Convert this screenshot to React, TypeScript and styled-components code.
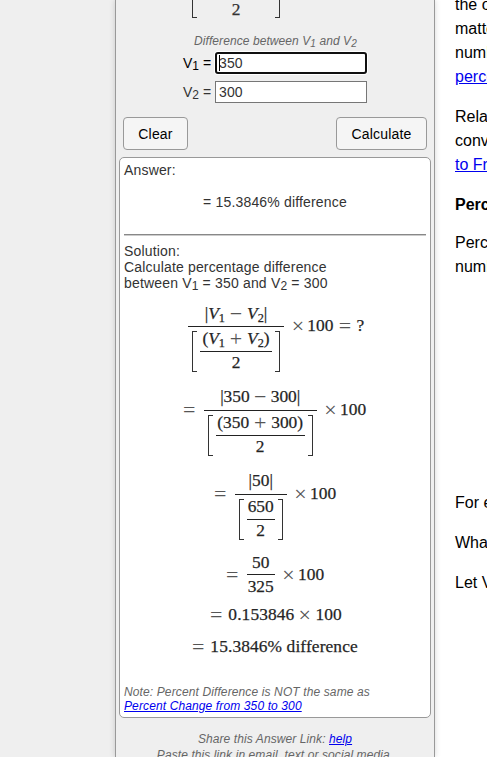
import React from "react";
import styled, { createGlobalStyle } from "styled-components";

const GlobalStyle = createGlobalStyle`
  * { box-sizing: border-box; }
  body {
    margin: 0;
    background: #fff;
    font-family: "Liberation Sans", Arial, sans-serif;
    overflow: hidden;
  }
  a { color: #0000ee; text-decoration: underline; }
`;

const Page = styled.div`
  display: grid;
  grid-template-columns: 115px 320px 1fr;
  width: 487px;
  height: 757px;
  overflow: hidden;
`;

const Gutter = styled.div`
  background: #efefef;
`;

const Calculator = styled.section`
  height: 757px;
  overflow: hidden;
  padding: 0 4px;
  background: #efefef;
  border-left: 1px solid #999;
  border-right: 1px solid #999;
  box-shadow: 0 0 6px rgba(0, 0, 0, 0.16);
  color: #333;
  font-size: 14px;
  clip-path: inset(0 -8px);
`;

const FormulaTail = styled.div`
  display: flex;
  height: 18px;
  padding-left: 72px;
`;

const FormulaTwo = styled.div`
  width: 78px;
  text-align: center;
  font: 17.4px/18px "Liberation Serif", serif;
  -webkit-text-stroke: 0.25px #333;
`;

const Bracket = styled.span<{ $side: "left" | "right"; $height: number }>`
  flex: none;
  width: 5px;
  height: ${(p) => p.$height}px;
  border: 1px solid #333;
  border-top-width: ${(p) => (p.$height < 30 ? 0 : 1)}px;
  border-left-width: ${(p) => (p.$side === "left" ? 1 : 0)}px;
  border-right-width: ${(p) => (p.$side === "right" ? 1 : 0)}px;
`;

const Caption = styled.div`
  height: 17px;
  margin-top: 15px;
  padding-left: 74px;
  color: #666;
  font-size: 12px;
  font-style: italic;
  letter-spacing: 0.08px;
  line-height: 17px;
  white-space: nowrap;
`;

const Sub = styled.sub`
  font-size: 12px;
  line-height: 0;
  vertical-align: -2px;
`;

const CaptionSub = styled(Sub)`
  font-size: 10px;
`;

const Field = styled.label<{ $active?: boolean }>`
  display: flex;
  align-items: center;
  height: 22px;
  margin-top: ${(p) => (p.$active ? 2 : 7)}px;
  padding-left: 63px;
  color: ${(p) => (p.$active ? "#000" : "#333")};
`;

const FieldName = styled.span`
  width: 32px;
  white-space: nowrap;
`;

const InputFrame = styled.span`
  position: relative;
  display: flex;
`;

const Input = styled.input<{ $active?: boolean }>`
  width: 152px;
  height: 22px;
  padding: 0 ${(p) => (p.$active ? 2 : 3)}px;
  border: ${(p) => (p.$active ? "2px solid #101010" : "1px solid #767676")};
  border-radius: ${(p) => (p.$active ? 3 : 0)}px;
  outline: none;
  background: #fff;
  box-shadow: ${(p) => (p.$active ? "0 0 0 1px #fff" : "none")};
  color: #333;
  font: 14px "Liberation Sans", Arial, sans-serif;
  letter-spacing: 0.15px;
`;

const Caret = styled.i`
  position: absolute;
  left: 4px;
  top: 3px;
  width: 1px;
  height: 16px;
  background: #000;
`;

const Buttons = styled.div`
  display: flex;
  justify-content: space-between;
  height: 33px;
  margin: 14px 3px 0;
`;

const Button = styled.button<{ $width: number }>`
  width: ${(p) => p.$width}px;
  height: 33px;
  padding: 0;
  border: 1px solid #999;
  border-radius: 4px;
  background: #f5f5f5;
  color: #000;
  font: 14px "Liberation Sans", Arial, sans-serif;
  letter-spacing: 0.2px;
`;

const Result = styled.div`
  width: 312px;
  height: 561px;
  margin-top: 7px;
  padding: 4px 4px 0;
  border: 1px solid #999;
  border-radius: 5px;
  background: #fff;
  letter-spacing: 0.17px;
  line-height: 16px;
  margin-left: -1px;
`;

const Answer = styled.div`
  margin-top: 16px;
  text-align: center;
`;

const Rule = styled.hr`
  height: 2px;
  margin: 24px 0 7px;
  border: 0;
  border-top: 1px solid #888;
  background: #ccc;
`;

const Equations = styled.div`
  height: 380px;
  color: #222;
  font-family: "Liberation Serif", serif;
  font-size: 17.4px;
  letter-spacing: 0;
  line-height: 18px;
  white-space: nowrap;
  -webkit-text-stroke: 0.25px #333;
`;

const Equation = styled.div<{ $left: number; $gap: number }>`
  display: flex;
  align-items: flex-start;
  margin-top: ${(p) => p.$gap}px;
  margin-left: ${(p) => p.$left - 124}px;
`;

const Side = styled.span<{ $drop?: number }>`
  margin-top: ${(p) => p.$drop ?? 0}px;
`;

const Spaced = styled.span`
  margin-left: 2px;
  letter-spacing: 0.1px;
`;

const Operator = styled.span<{ $width: number }>`
  display: inline-block;
  width: ${(p) => p.$width}px;
  color: #555;
  font-size: 22px;
  line-height: 0;
  text-align: center;
  vertical-align: -2px;
  -webkit-text-stroke: 0;
`;

const Fraction = styled.span<{ $width: number }>`
  display: flex;
  flex-direction: column;
  align-items: center;
  width: ${(p) => p.$width}px;
`;

const Numerator = styled.span<{ $height: number; $raised?: boolean }>`
  display: block;
  height: ${(p) => p.$height}px;
  line-height: ${(p) => (p.$raised ? 14 : 16)}px;
`;

const Bar = styled.span`
  width: 100%;
  height: 1px;
  background: #222;
`;

const Denominator = styled.span`
  display: flex;
  gap: 3px;
  height: 45px;
  padding-top: 4px;
`;

const PlainDenominator = styled.span`
  height: 21px;
  padding-top: 2px;
`;

const MathSub = styled.sub`
  font-size: 12.3px;
  line-height: 0;
  vertical-align: -3px;
`;

const Note = styled.div`
  color: #666;
  font-size: 12px;
  font-style: italic;
  letter-spacing: 0.12px;
  line-height: 14px;
`;

const Share = styled.div`
  margin-top: 13px;
  color: #666;
  font-size: 12px;
  font-style: italic;
  letter-spacing: 0.09px;
  line-height: 16px;
  text-align: center;
  white-space: nowrap;
`;

const Article = styled.article`
  width: 300px;
  padding-left: 20px;
  margin-top: -7px;
  color: #000;
  font-size: 16px;
  line-height: 24px;
  white-space: nowrap;
`;

const Paragraph = styled.p<{ $gap?: number }>`
  margin: ${(p) => p.$gap ?? 16}px 0 0;
`;

const Vm = ({ n }: { n: number }) => (
  <>
    <i>V</i>
    <MathSub>{n}</MathSub>
  </>
);

const Equals = () => <Operator $width={12}>=</Operator>;

const TimesHundred = () => (
  <>
    <Operator $width={19}>×</Operator>100
  </>
);

type NestedProps = {
  width: number;
  innerWidth: number;
  top: React.ReactNode;
  inner: React.ReactNode;
  topHeight: number;
};

const NestedFraction = ({ width, innerWidth, top, inner, topHeight }: NestedProps) => (
  <Fraction $width={width}>
    <Numerator $height={topHeight}>{top}</Numerator>
    <Bar />
    <Denominator>
      <Bracket $side="left" $height={41} />
      <Fraction $width={innerWidth}>
        <Numerator $height={20} $raised>{inner}</Numerator>
        <Bar />
        <PlainDenominator>2</PlainDenominator>
      </Fraction>
      <Bracket $side="right" $height={41} />
    </Denominator>
  </Fraction>
);

export default function App() {
  return (
    <>
      <GlobalStyle />
      <Page>
        <Gutter />
        <Calculator>
          <FormulaTail>
            <Bracket $side="left" $height={18} />
            <FormulaTwo>2</FormulaTwo>
            <Bracket $side="right" $height={18} />
          </FormulaTail>
          <Caption>
            Difference between V<CaptionSub>1</CaptionSub> and V<CaptionSub>2</CaptionSub>
          </Caption>
          <Field $active>
            <FieldName>V<Sub>1</Sub> =</FieldName>
            <InputFrame>
              <Input $active defaultValue="350" />
              <Caret />
            </InputFrame>
          </Field>
          <Field>
            <FieldName>V<Sub>2</Sub> =</FieldName>
            <InputFrame>
              <Input defaultValue="300" />
            </InputFrame>
          </Field>
          <Buttons>
            <Button $width={65}>Clear</Button>
            <Button $width={91}>Calculate</Button>
          </Buttons>
          <Result>
            <div>Answer:</div>
            <Answer>= 15.3846% difference</Answer>
            <Rule />
            <div>
              Solution:<br />
              Calculate percentage difference<br />
              between V<Sub>1</Sub> = 350 and V<Sub>2</Sub> = 300
            </div>
            <Equations>
              <Equation $left={188} $gap={14}>
                <NestedFraction
                  width={96}
                  innerWidth={72}
                  topHeight={21}
                  top={<>|<Vm n={1} /><Operator $width={22}>−</Operator><Vm n={2} />|</>}
                  inner={<>(<Vm n={1} /><Operator $width={22}>+</Operator><Vm n={2} />)</>}
                />
                <Side $drop={11}>
                  &nbsp;<TimesHundred /><Operator $width={23}>=</Operator>?
                </Side>
              </Equation>
              <Equation $left={183} $gap={16}>
                <Side $drop={12}><Equals /></Side>
                <Side>&nbsp;&nbsp;</Side>
                <NestedFraction
                  width={113}
                  innerWidth={89}
                  topHeight={22}
                  top={<>|350<Operator $width={21}>−</Operator>300|</>}
                  inner={<>(350<Operator $width={22}>+</Operator>300)</>}
                />
                <Side $drop={12}>&nbsp;<TimesHundred /></Side>
              </Equation>
              <Equation $left={214} $gap={16}>
                <Side $drop={12}><Equals /></Side>
                <Side>&nbsp;&nbsp;</Side>
                <NestedFraction
                  width={52}
                  innerWidth={28}
                  topHeight={22}
                  top="|50|"
                  inner="650"
                />
                <Side $drop={12}>&nbsp;<TimesHundred /></Side>
              </Equation>
              <Equation $left={226} $gap={14}>
                <Side $drop={11}><Equals /></Side>
                <Side>&nbsp;&nbsp;</Side>
                <Fraction $width={28}>
                  <Numerator $height={20}>50</Numerator>
                  <Bar />
                  <PlainDenominator>325</PlainDenominator>
                </Fraction>
                <Side $drop={11}>&nbsp;<TimesHundred /></Side>
              </Equation>
              <Equation $left={210} $gap={9}>
                <Side><Equals /> <Spaced>0.153846<Operator $width={21}>×</Operator>100</Spaced></Side>
              </Equation>
              <Equation $left={192} $gap={14}>
                <Side><Equals /> <Spaced>15.3846% difference</Spaced></Side>
              </Equation>
            </Equations>
            <Note>
              Note: Percent Difference is NOT the same as<br />
              <a href="#change">Percent Change from 350 to 300</a>
            </Note>
          </Result>
          <Share>
            Share this Answer Link: <a href="#help">help</a><br />
            Paste this link in email, text or social media.
          </Share>
        </Calculator>
        <Article>
          <Paragraph $gap={0}>
            the order does not<br />
            matter as both<br />
            numbers give the<br />
            <a href="#percent">percentage</a>
          </Paragraph>
          <Paragraph>
            Related: to<br />
            convert see<br />
            <a href="#fraction">to Fraction</a>
          </Paragraph>
          <Paragraph><b>Percentage</b></Paragraph>
          <Paragraph $gap={14}>
            Percentage<br />
            numbers
          </Paragraph>
          <Paragraph $gap={212}>For example</Paragraph>
          <Paragraph>What is</Paragraph>
          <Paragraph>Let V</Paragraph>
        </Article>
      </Page>
    </>
  );
}
